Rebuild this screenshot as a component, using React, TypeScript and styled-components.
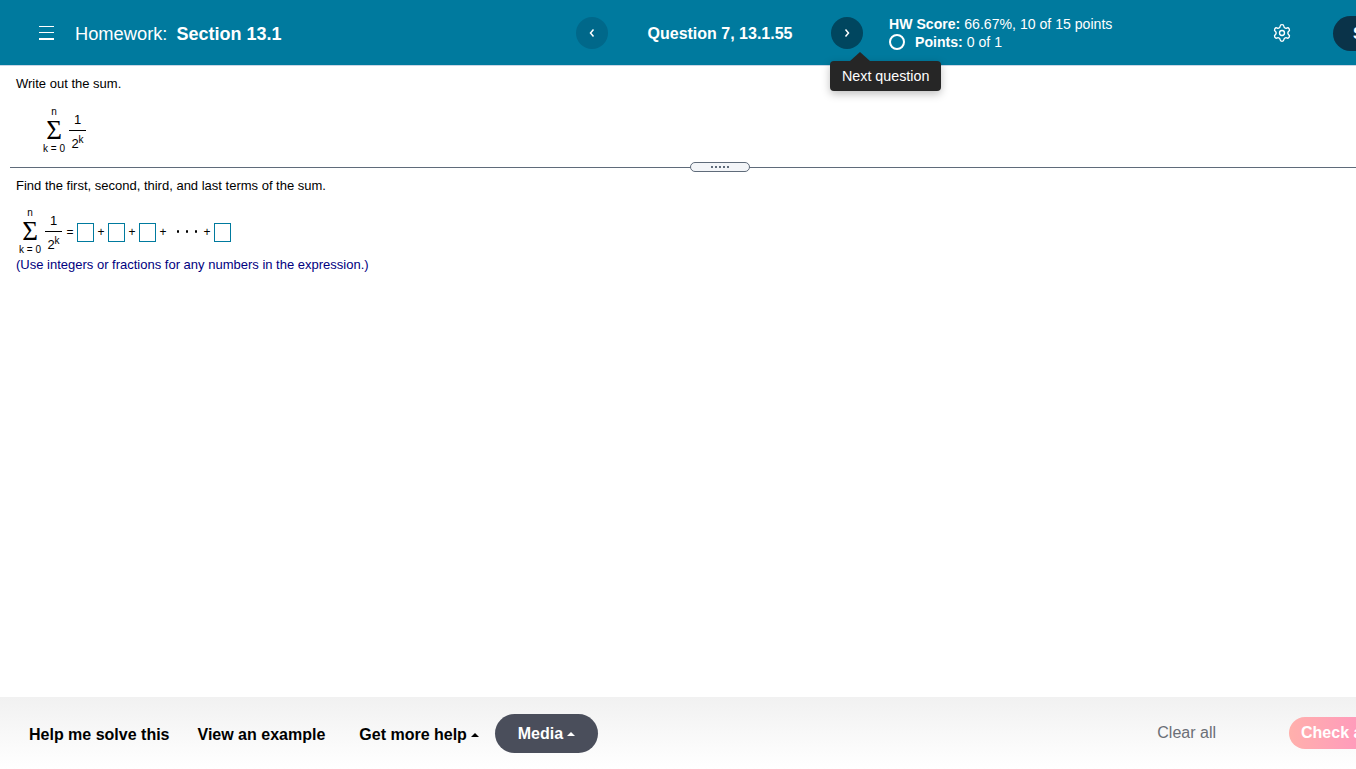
import React from 'react';
import styled, { createGlobalStyle } from 'styled-components';
import { Settings } from 'lucide-react';

const GlobalStyle = createGlobalStyle`
  html, body {
    margin: 0;
    padding: 0;
    height: 100%;
    overflow: hidden;
    background: #fff;
    font-family: 'Liberation Sans', Arial, sans-serif;
  }
  #root { height: 100%; }
`;

const Sum: React.FC<{ small?: boolean }> = ({ small }) => (
  <SumWrap small={small}>
    <Limits>
      <LimitTop>n</LimitTop>
      <Sigma>Σ</Sigma>
      <LimitBottom>k = 0</LimitBottom>
    </Limits>
    <Fraction>
      <Numerator>1</Numerator>
      <Denominator>
        2<sup>k</sup>
      </Denominator>
    </Fraction>
  </SumWrap>
);

const App: React.FC = () => {
  return (
    <Page>
      <GlobalStyle />
      <Header>
        <MenuButton aria-label="menu">
          <span />
          <span />
          <span />
        </MenuButton>
        <Title>
          Homework: <b>Section 13.1</b>
        </Title>
        <QuestionNav>
          <NavBtn>
            <Chevron viewBox="0 0 8 10">
              <path d="M5.5 1.5 2.5 5l3 3.5" />
            </Chevron>
          </NavBtn>
          <QuestionLabel>Question 7, 13.1.55</QuestionLabel>
          <NavBtn active>
            <Chevron viewBox="0 0 8 10">
              <path d="M2.5 1.5 5.5 5l-3 3.5" />
            </Chevron>
            <Tooltip>Next question</Tooltip>
          </NavBtn>
        </QuestionNav>
        <Score>
          <ScoreRow>
            <b>HW Score:</b> 66.67%, 10 of 15 points
          </ScoreRow>
          <ScoreRow>
            <Ring />
            <b>Points:</b> 0 of 1
          </ScoreRow>
        </Score>
        <Gear size={20} strokeWidth={1.6} />
        <Avatar>S</Avatar>
      </Header>

      <Main>
        <TopPane>
          <Prompt>Write out the sum.</Prompt>
          <TopMath>
            <Sum />
          </TopMath>
        </TopPane>
        <Splitter>
          <Handle>
            <i />
            <i />
            <i />
            <i />
            <i />
          </Handle>
        </Splitter>
        <BottomPane>
          <Prompt>Find the first, second, third, and last terms of the sum.</Prompt>
          <AnswerLine>
            <Sum small />
            <Op>=</Op>
            <AnswerBox />
            <Op>+</Op>
            <AnswerBox />
            <Op>+</Op>
            <AnswerBox />
            <Op>+</Op>
            <Dots>
              <i />
              <i />
              <i />
            </Dots>
            <Op>+</Op>
            <AnswerBox />
          </AnswerLine>
          <Hint>(Use integers or fractions for any numbers in the expression.)</Hint>
        </BottomPane>
      </Main>

      <Footer>
        <HelpLink space={28}>Help me solve this</HelpLink>
        <HelpLink space={34}>View an example</HelpLink>
        <HelpLink space={16}>
          Get more help
          <Caret />
        </HelpLink>
        <MediaBtn>
          Media
          <Caret />
        </MediaBtn>
        <ClearAll>Clear all</ClearAll>
        <CheckBtn>Check answer</CheckBtn>
      </Footer>
    </Page>
  );
};
export default App;

const Page = styled.div`
  height: 100vh;
  display: flex;
  flex-direction: column;
  overflow: hidden;
`;

const Header = styled.header`
  flex: none;
  box-sizing: border-box;
  height: 66px;
  padding: 1px 0 0 39px;
  background: #007a9e;
  border-bottom: 1px solid #c9d6e6;
  color: #fff;
  display: flex;
  align-items: center;
  white-space: nowrap;
  & > * {
    flex: none;
  }
`;

const MenuButton = styled.div`
  width: 15px;
  height: 14px;
  margin: -1px 21px 0 0;
  display: flex;
  flex-direction: column;
  justify-content: space-between;
  span {
    display: block;
    height: 1.5px;
    background: #fff;
  }
`;

const Title = styled.div`
  width: 501px;
  padding-top: 1px;
  font-size: 18.3px;
  b {
    margin-left: 4px;
    font-size: 18px;
  }
`;

const QuestionNav = styled.div`
  display: flex;
  align-items: center;
`;

const NavBtn = styled.div<{ active?: boolean }>`
  position: relative;
  flex: none;
  width: 32px;
  height: 32px;
  border-radius: 50%;
  background: ${({ active }) => (active ? '#00465f' : '#00688a')};
  display: flex;
  align-items: center;
  justify-content: center;
`;

const Chevron = styled.svg`
  width: 8px;
  height: 10px;
  fill: none;
  stroke: #fff;
  stroke-width: 1.5;
`;

const Tooltip = styled.div`
  position: absolute;
  top: 44px;
  left: -1px;
  height: 30px;
  padding: 0 12px;
  box-sizing: border-box;
  display: flex;
  align-items: center;
  background: #262626;
  border-radius: 4px;
  color: #fff;
  font-size: 14.3px;
  box-shadow: 0 3px 8px rgba(0, 0, 0, 0.25);
  z-index: 5;
  &::before {
    content: '';
    position: absolute;
    left: 20px;
    top: -9px;
    border-left: 10px solid transparent;
    border-right: 10px solid transparent;
    border-bottom: 9px solid #262626;
  }
`;

const QuestionLabel = styled.div`
  flex: none;
  box-sizing: border-box;
  width: 223px;
  padding: 1px 0 0 1px;
  text-align: center;
  font-size: 16px;
  font-weight: 700;
`;

const Score = styled.div`
  margin-left: 26px;
  width: 383px;
  font-size: 14.1px;
  line-height: 18px;
`;

const ScoreRow = styled.div`
  display: flex;
  align-items: center;
  gap: 4px;
`;

const Ring = styled.span`
  box-sizing: border-box;
  width: 16px;
  height: 16px;
  margin-right: 6px;
  border: 2px solid #fff;
  border-radius: 50%;
`;

const Gear = styled(Settings)`
  color: #fff;
`;

const Avatar = styled.div`
  margin-left: 41px;
  width: 60px;
  height: 35px;
  border-radius: 18px;
  background: #0a3349;
  padding-left: 20px;
  box-sizing: border-box;
  line-height: 35px;
  font-size: 16px;
  font-weight: 700;
`;

const Main = styled.main`
  flex: 1;
  min-height: 0;
  display: flex;
  flex-direction: column;
  color: #000;
  font-size: 13px;
`;

const TopPane = styled.section`
  height: 101px;
  box-sizing: border-box;
  padding: 10px 16px 0;
`;

const Prompt = styled.div`
  line-height: 16px;
`;

const TopMath = styled.div`
  margin: 15px 0 0 26px;
`;

const Splitter = styled.div`
  position: relative;
  margin-left: 10px;
  height: 1px;
  background: #5f6b7a;
`;

const Handle = styled.div`
  position: absolute;
  left: 680px;
  top: -5px;
  box-sizing: border-box;
  width: 60px;
  height: 10px;
  border: 1px solid #5f6b7a;
  border-radius: 5px;
  background: #f3f5f8;
  display: flex;
  align-items: center;
  justify-content: center;
  gap: 2px;
  i {
    width: 2px;
    height: 2px;
    background: #5f6b7a;
  }
`;

const BottomPane = styled.section`
  padding: 10px 16px 0;
`;

const AnswerLine = styled.div`
  margin-top: 14px;
  display: flex;
  align-items: center;
  height: 47px;
  padding-left: 2px;
`;

const SumWrap = styled.div<{ small?: boolean }>`
  display: flex;
  align-items: center;
  margin-right: ${({ small }) => (small ? '1px' : '0')};
`;

const Limits = styled.div`
  display: flex;
  flex-direction: column;
  align-items: center;
  width: 24px;
`;

const LimitTop = styled.div`
  font-size: 10px;
  line-height: 10px;
`;

const Sigma = styled.div`
  font-family: 'Liberation Serif', serif;
  font-size: 27px;
  line-height: 26px;
  height: 26px;
`;

const LimitBottom = styled.div`
  font-size: 10px;
  line-height: 11px;
  white-space: nowrap;
`;

const Fraction = styled.div`
  margin: 1px 0 0 3px;
  width: 17px;
  display: flex;
  flex-direction: column;
  align-items: center;
`;

const Numerator = styled.div`
  width: 100%;
  padding-bottom: 2px;
  text-align: center;
  font-size: 13px;
  line-height: 17px;
  border-bottom: 1px solid #000;
`;

const Denominator = styled.div`
  padding-top: 5px;
  font-size: 13px;
  line-height: 16px;
  white-space: nowrap;
  sup {
    font-size: 10px;
    line-height: 0;
  }
`;

const Op = styled.span`
  width: 8px;
  margin: 0 3px;
  font-size: 12px;
  text-align: center;
`;

const Dots = styled.span`
  display: flex;
  gap: 6.5px;
  margin: 0 3px 0 6.5px;
  i {
    width: 2.5px;
    height: 2.5px;
    border-radius: 50%;
    background: #000;
  }
`;

const AnswerBox = styled.span`
  box-sizing: border-box;
  width: 17px;
  height: 19px;
  margin-top: 1px;
  border: 1px solid #007a9e;
  background: #fff;
`;

const Hint = styled.div`
  color: #000080;
  line-height: 16px;
  margin-top: 2px;
`;

const Footer = styled.footer`
  flex: none;
  height: 72px;
  box-sizing: border-box;
  padding: 0 0 0 29px;
  background: linear-gradient(#f1f1f1, #ffffff);
  display: flex;
  align-items: center;
  font-size: 16px;
  font-weight: 700;
  white-space: nowrap;
  & > * {
    flex: none;
  }
`;

const HelpLink = styled.div<{ space: number }>`
  margin-right: ${({ space }) => space}px;
  display: flex;
  align-items: center;
  color: #000;
  padding-top: 3px;
`;

const Caret = styled.span`
  margin-left: 4px;
  border-left: 4px solid transparent;
  border-right: 4px solid transparent;
  border-bottom: 4px solid currentColor;
`;

const MediaBtn = styled.div`
  box-sizing: border-box;
  width: 103px;
  height: 39px;
  margin-top: 1px;
  border-radius: 20px;
  background: #4a4e5b;
  color: #fff;
  display: flex;
  align-items: center;
  justify-content: center;
`;

const ClearAll = styled.div`
  margin-left: auto;
  margin-right: 73px;
  color: #6b6f76;
  font-weight: 400;
`;

const CheckBtn = styled.div`
  width: 120px;
  margin-right: -53px;
  height: 32px;
  box-sizing: border-box;
  border-radius: 16px;
  padding-left: 12px;
  line-height: 32px;
  color: #fff;
  background: linear-gradient(90deg, #ffb0ac, #ff8bc7);
`;
